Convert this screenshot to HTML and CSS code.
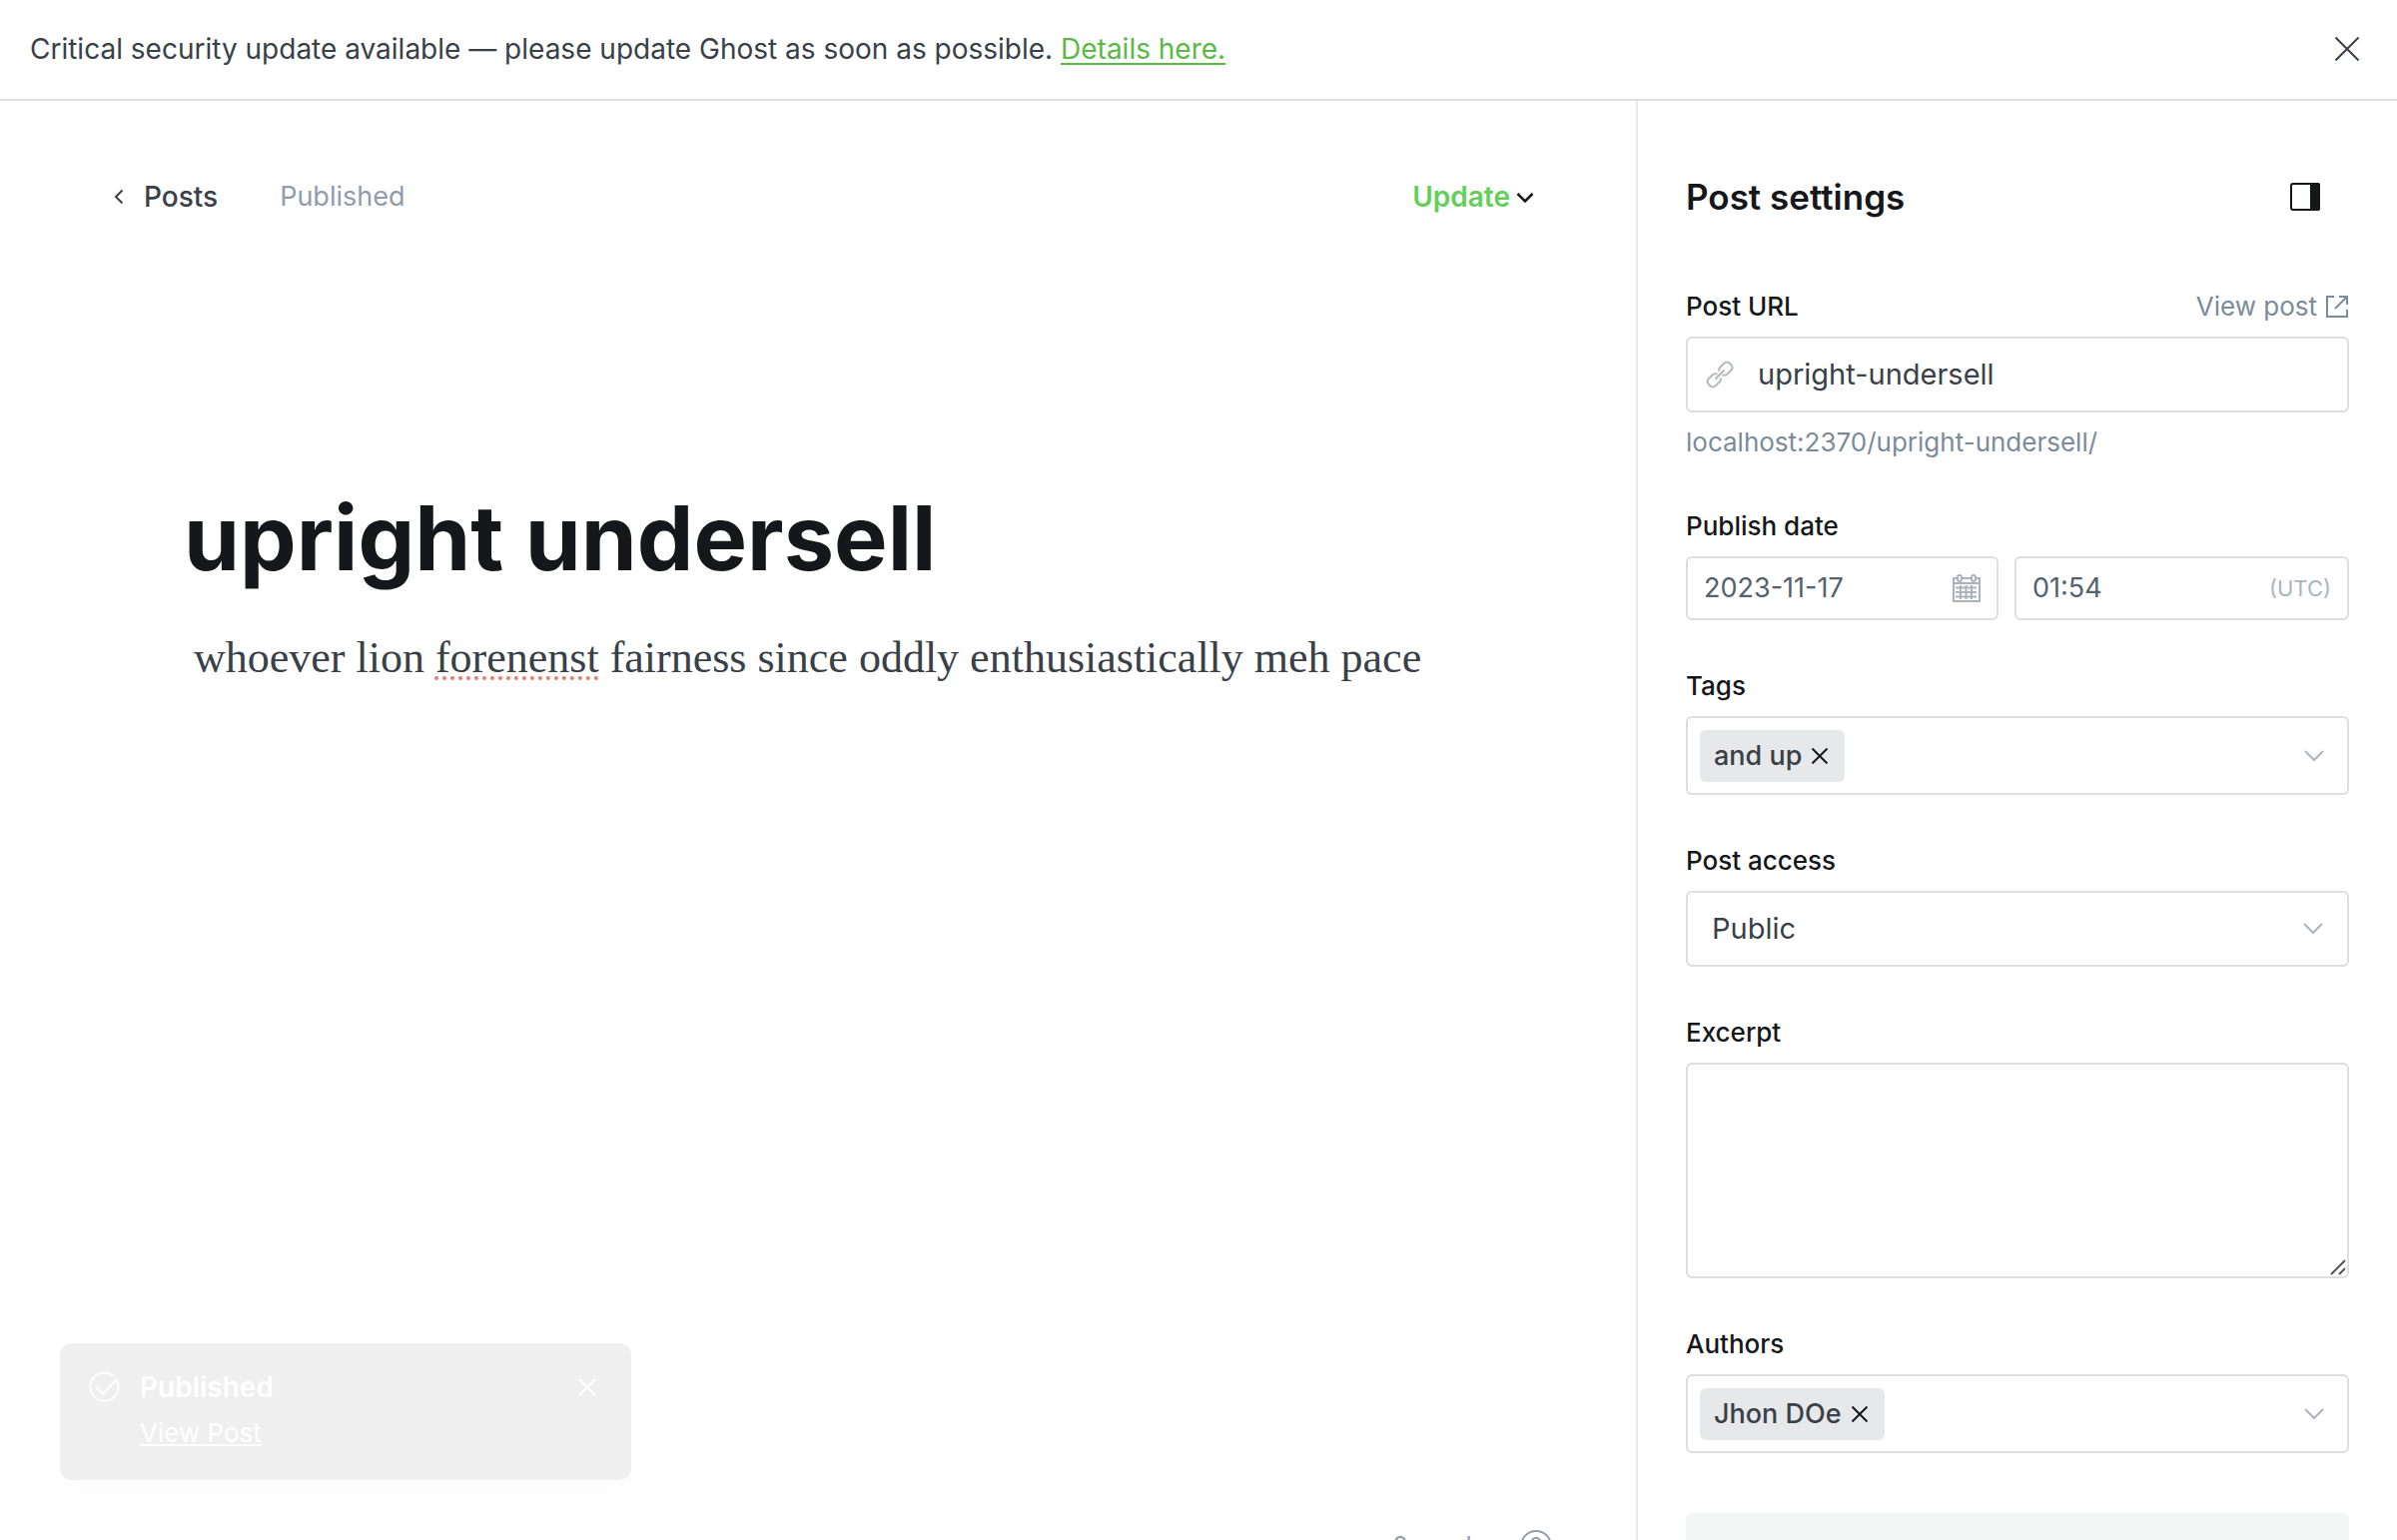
FILE: index.html
```
<!DOCTYPE html>
<html lang="en">
<head>
<meta charset="utf-8">
<meta name="viewport" content="width=device-width, initial-scale=1">
<title>upright undersell - Post editor</title>
<link rel="stylesheet" href="styles.css">
</head>
<body>
<div class="app">
  <aside class="alert" role="status">
    <p class="alert-text">Critical security update available — please update Ghost as soon as possible. <a href="#details">Details here.</a></p>
    <button class="icon-button" type="button" aria-label="Dismiss alert">
      <svg class="icon-close" viewBox="0 0 24 24"><path d="M0.500 0.500l23 23M23.500 0.500l-23 23"/></svg>
    </button>
  </aside>

  <div class="workspace">
    <main class="editor">
      <header class="editor-header">
        <nav class="editor-nav">
          <a class="back-link" href="#posts">
            <svg class="icon-back" viewBox="0 0 10 16"><path d="M8.500 1.500L2 8l6.500 6.500"/></svg>
            Posts
          </a>
          <span class="status">Published</span>
        </nav>
        <button class="update-button" type="button">
          Update
          <svg class="icon-caret" viewBox="0 0 18 12"><path d="M1.500 3L9 10.500 16.500 3" stroke-width="2.500"/></svg>
        </button>
      </header>
      <article class="post">
        <h1 class="post-title">upright undersell</h1>
        <p class="post-body">whoever lion <span class="misspelled">forenenst</span> fairness since oddly enthusiastically meh pace</p>
      </article>
      <footer class="editor-footer">
        <span>9 words</span>
        <button class="icon-button" type="button" aria-label="Help">
          <svg class="icon-help" viewBox="0 0 32 32"><circle cx="16" cy="16" r="15"/><path d="M11.500 12.500c0-6 9-6 9 0 0 3.500-4.500 3-4.500 7M16 23v2"/></svg>
        </button>
      </footer>
    </main>

    <aside class="settings">
      <header class="settings-header">
        <h2>Post settings</h2>
        <button class="icon-button" type="button" aria-label="Toggle settings">
          <svg class="icon-panel" viewBox="0 0 30 28"><rect class="panel-frame" x="1" y="1" width="28" height="26" rx="2"/><path class="panel-fill" d="M21 1h7a1 1 0 0 1 1 1v24a1 1 0 0 1-1 1h-7z"/></svg>
        </button>
      </header>

      <form class="settings-form">
        <div class="field">
          <div class="label-row">
            <label for="url">Post URL</label>
            <a class="view-post" href="#view">View post
              <svg class="icon-external" viewBox="0 0 24 24"><path d="M9 2H2v20h20v-7M14 2h8v8M22 2L10 14"/></svg>
            </a>
          </div>
          <div class="control control-url">
            <svg class="icon-link" viewBox="0 0 28 28"><path d="M9.500 18.500l9-9M14.500 17.500c1 1.500 0 3-1 4l-3.500 3.500c-2 2-4 2-6 0l-1-1c-2-2-2-4 0-6l3.500-3.500c1.500-1.500 3-1.500 5-1M13.500 10.500c-1-1.500 0-3 1-4L18 3c2-2 4-2 6 0l1 1c2 2 2 4 0 6l-3.500 3.500c-1.500 1.500-3 1.500-5 1"/></svg>
            <input id="url" type="text" value="upright-undersell">
          </div>
          <p class="hint">localhost:2370/upright-undersell/</p>
        </div>

        <div class="field">
          <label for="date">Publish date</label>
          <div class="date-row">
            <div class="control control-small">
              <input id="date" type="text" value="2023-11-17">
              <svg class="icon-calendar" viewBox="0 0 28 28"><path d="M5 4H1v23h26V4h-4M9 4h10M1 9h26M5 3a2 2 0 0 1 4 0v2a2 2 0 0 1-4 0zM19 3a2 2 0 0 1 4 0v2a2 2 0 0 1-4 0zM3 13.500h21M3 18h21M3 22.500h21M8 11v14M13.500 11v14M19 11v14"/></svg>
            </div>
            <div class="control control-small">
              <input type="text" value="01:54" aria-label="Publish time">
              <span class="timezone">(UTC)</span>
            </div>
          </div>
        </div>

        <div class="field">
          <label for="tags">Tags</label>
          <div class="control control-tokens">
            <span class="token">and up
              <button class="icon-button" type="button" aria-label="Remove and up"><svg class="icon-remove" viewBox="0 0 16 16"><path d="M0.500 0.500l15 15M15.500 0.500l-15 15"/></svg></button>
            </span>
            <input id="tags" type="text">
            <svg class="icon-chevron" viewBox="0 0 20 12"><path d="M1 1l9 9 9-9"/></svg>
          </div>
        </div>

        <div class="field">
          <label for="access">Post access</label>
          <div class="control control-select">
            <select id="access"><option>Public</option><option>Members only</option></select>
            <svg class="icon-chevron" viewBox="0 0 20 12"><path d="M1 1l9 9 9-9"/></svg>
          </div>
        </div>

        <div class="field">
          <label for="excerpt">Excerpt</label>
          <div class="control excerpt">
            <textarea id="excerpt"></textarea>
            <svg class="icon-resize" viewBox="0 0 16 16"><path d="M1 15L15 1M9 15l6-6"/></svg>
          </div>
        </div>

        <div class="field field-last">
          <label for="authors">Authors</label>
          <div class="control control-tokens">
            <span class="token">Jhon DOe
              <button class="icon-button" type="button" aria-label="Remove Jhon DOe"><svg class="icon-remove" viewBox="0 0 16 16"><path d="M0.500 0.500l15 15M15.500 0.500l-15 15"/></svg></button>
            </span>
            <input id="authors" type="text">
            <svg class="icon-chevron" viewBox="0 0 20 12"><path d="M1 1l9 9 9-9"/></svg>
          </div>
        </div>

        <button class="card-button" type="button">Meta data</button>
      </form>
    </aside>
  </div>

  <section class="toast" role="status">
    <svg class="icon-check" viewBox="0 0 34 34"><path d="M27 5A15 15 0 1 0 31 10M9 17l7 7L31 8"/></svg>
    <div class="toast-content">
      <strong>Published</strong>
      <a href="#view">View Post</a>
    </div>
    <button class="icon-button" type="button" aria-label="Close notification"><svg class="icon-toast-close" viewBox="0 0 18 18"><path d="M1 1l16 16M17 1L1 17"/></svg></button>
  </section>
</div>
</body>
</html>
```
FILE: styles.css
```
* {
  box-sizing: border-box;
}

body {
  margin: 0;
  background: #fff;
  color: #394047;
  font-family: Inter, "Liberation Sans", sans-serif;
  font-size: 28px;
  line-height: 40px;
}

h1, h2, p {
  margin: 0;
}

button, input, select, textarea {
  margin: 0;
  padding: 0;
  border: 0;
  background: transparent;
  color: inherit;
  font: inherit;
}

input, textarea, select {
  outline: 0;
}

svg {
  display: block;
  flex: none;
  fill: none;
  stroke: currentColor;
  stroke-width: 2;
}

.app {
  position: relative;
  display: flex;
  flex-direction: column;
  height: 100vh;
  overflow: hidden;
}

.alert {
  display: flex;
  align-items: center;
  justify-content: space-between;
  padding: 29px 38px 30px 30px;
  border-bottom: 2px solid #dfe1e1;
}

.alert a {
  color: #5ab946;
  text-underline-offset: 4px;
}

.icon-button {
  display: flex;
  align-items: center;
  justify-content: center;
}

.icon-close {
  width: 24px;
  height: 24px;
}

.workspace {
  display: flex;
  flex: 1;
  min-height: 0;
}

.editor {
  display: flex;
  flex: 1;
  flex-direction: column;
  min-width: 0;
}

.editor-header {
  display: flex;
  align-items: center;
  justify-content: space-between;
  padding: 76px 102px 0 114px;
}

.editor-nav {
  display: flex;
  gap: 62px;
}

.back-link {
  display: flex;
  align-items: center;
  gap: 20px;
  color: #394047;
  font-weight: 500;
  text-decoration: none;
}

.icon-back {
  width: 10px;
  height: 16px;
}

.status {
  color: #8e9cac;
  font-size: 27px;
}

.update-button {
  display: flex;
  align-items: center;
  gap: 6px;
  color: #62cf58;
  font-weight: 600;
}

.icon-caret {
  width: 18px;
  height: 12px;
  color: #15171a;
}

.post {
  flex: 1;
  padding: 262px 184px 0;
}

.post-title {
  color: #15171a;
  font-size: 90px;
  font-weight: 700;
  line-height: 120px;
}

.post-body {
  padding: 30px 10px 0;
  font-family: "Liberation Serif", serif;
  font-size: 44px;
  line-height: 60px;
}

.misspelled {
  text-decoration: underline dotted #f2766a 4px;
  text-underline-offset: 4px;
}

.editor-footer {
  display: flex;
  align-items: flex-start;
  justify-content: flex-end;
  gap: 36px;
  height: 10px;
  padding-right: 84px;
  color: #8e9cac;
  font-size: 24px;
  line-height: 32px;
}

.icon-help {
  width: 32px;
  height: 32px;
}

.settings {
  width: 762px;
  padding: 0 48px;
  border-left: 2px solid #e6e9eb;
}

.settings-header {
  display: flex;
  align-items: center;
  justify-content: space-between;
  padding: 76px 29px 0 0;
}

.settings-header h2 {
  color: #15171a;
  font-size: 35px;
  font-weight: 600;
  line-height: 40px;
}

.icon-panel {
  width: 30px;
  height: 28px;
  color: #15171a;
}

.panel-fill {
  fill: currentColor;
}

.settings-form {
  padding-top: 72px;
}

.field {
  display: flex;
  flex-direction: column;
  gap: 12px;
  margin-bottom: 48px;
}

.label-row {
  display: flex;
  align-items: center;
  justify-content: space-between;
}

.field label {
  color: #15171a;
  font-size: 26px;
  font-weight: 500;
  line-height: 36px;
}

.view-post {
  display: flex;
  align-items: center;
  gap: 8px;
  color: #7c8b9a;
  font-size: 26px;
  line-height: 36px;
  text-decoration: none;
}

.icon-external {
  width: 24px;
  height: 24px;
}

.control {
  display: flex;
  align-items: center;
  border: 2px solid #dddedf;
  border-radius: 6px;
}

.control input {
  flex: 1;
  width: 0;
  min-width: 0;
}

.control-url {
  gap: 24px;
  height: 76px;
  padding: 0 18px;
  font-size: 29px;
}

.icon-link {
  width: 28px;
  height: 28px;
  color: #b4b9be;
}

.hint {
  color: #7c8b9a;
  font-size: 26px;
  line-height: 36px;
}

.date-row {
  display: grid;
  grid-template-columns: 313fr 335fr;
  gap: 16px;
}

.control-small {
  min-width: 0;
  height: 64px;
  padding: 0 16px;
  color: #54616e;
  font-size: 27px;
}

.icon-calendar {
  width: 28px;
  height: 28px;
  color: #abb4be;
}

.timezone {
  color: #abb4be;
  font-size: 22px;
}

.control-tokens {
  height: 79px;
  padding: 0 23px 0 12px;
}

.token {
  display: flex;
  align-items: center;
  gap: 10px;
  height: 52px;
  padding: 0 17px 0 14px;
  border-radius: 6px;
  background: #e6e8ea;
  font-size: 27px;
  font-weight: 500;
}

.icon-remove {
  width: 16px;
  height: 16px;
  color: #15171a;
}

.icon-chevron {
  width: 20px;
  height: 12px;
  color: #abb4be;
}

.control-select {
  height: 76px;
  padding: 0 24px;
  font-size: 29px;
}

.control-select select {
  flex: 1;
  appearance: none;
}

.excerpt {
  position: relative;
  align-items: stretch;
  height: 216px;
}

.excerpt textarea {
  flex: 1;
  resize: none;
}

.icon-resize {
  position: absolute;
  right: 1px;
  bottom: 1px;
  width: 16px;
  height: 16px;
  color: #555;
}

.field-last {
  margin-bottom: 60px;
}

.card-button {
  display: block;
  width: 100%;
  padding: 17px 30px;
  border-radius: 6px;
  background: #f4f6f6;
  font-size: 30px;
  font-weight: 500;
  line-height: 48px;
  text-align: left;
}

.toast {
  position: absolute;
  bottom: 60px;
  left: 60px;
  display: flex;
  align-items: flex-start;
  gap: 20px;
  width: 572px;
  padding: 24px 35px 27px 28px;
  border-radius: 12px;
  background: #efefef;
  box-shadow: 0 24px 40px rgb(0 0 0 / 1%);
  color: #fff;
}

.icon-check {
  width: 32px;
  height: 40px;
}

.toast-content {
  display: flex;
  flex: 1;
  flex-direction: column;
  align-items: flex-start;
  gap: 6px;
}

.toast strong {
  font-weight: 600;
}

.toast a {
  color: inherit;
  font-size: 26px;
}

.toast .icon-button {
  height: 40px;
}

.icon-toast-close {
  width: 18px;
  height: 18px;
}
```
